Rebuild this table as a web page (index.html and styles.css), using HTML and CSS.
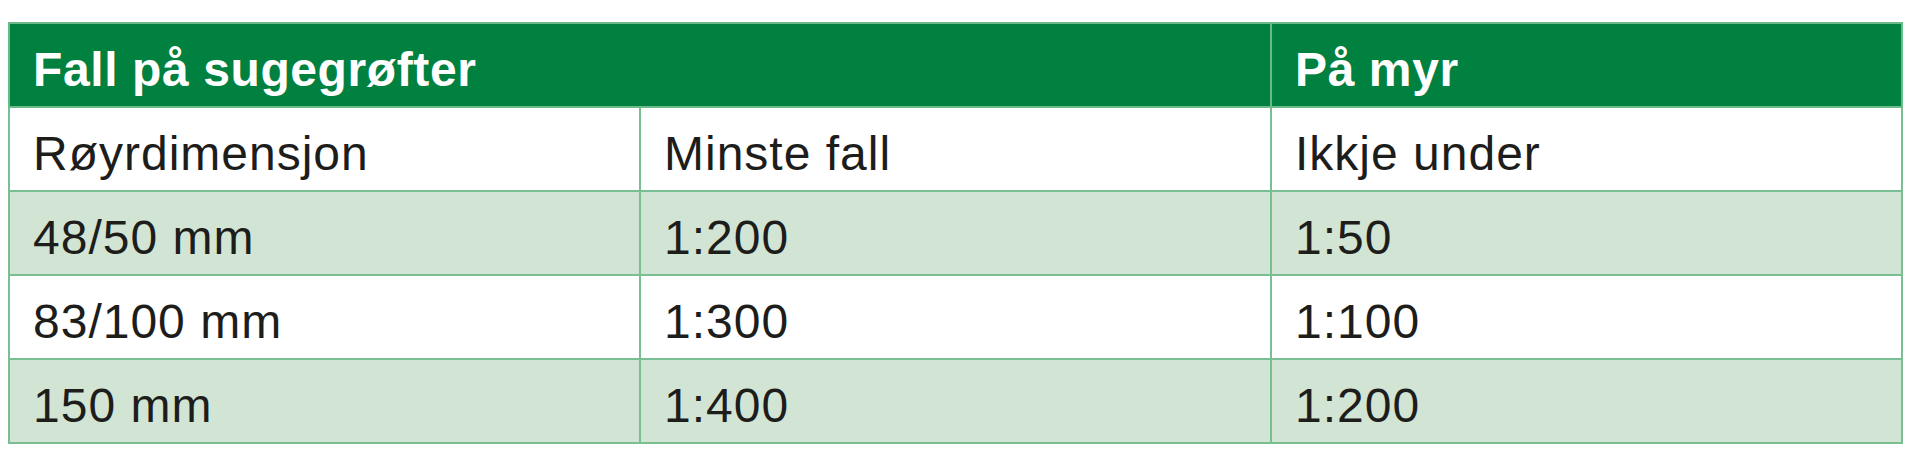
FILE: index.html
```html
<!DOCTYPE html>
<html lang="no">
<head>
<meta charset="utf-8">
<title>Fall på sugegrøfter</title>
<link rel="stylesheet" href="styles.css">
</head>
<body>
<table class="fall-table">
  <colgroup>
    <col class="col-third">
    <col class="col-third">
    <col class="col-third">
  </colgroup>
  <thead>
    <tr class="head-row">
      <th colspan="2">Fall på sugegrøfter</th>
      <th>På myr</th>
    </tr>
  </thead>
  <tbody>
    <tr class="row-white">
      <td>Røyrdimensjon</td>
      <td>Minste fall</td>
      <td>Ikkje under</td>
    </tr>
    <tr class="row-green">
      <td>48/50 mm</td>
      <td>1:200</td>
      <td>1:50</td>
    </tr>
    <tr class="row-white">
      <td>83/100 mm</td>
      <td>1:300</td>
      <td>1:100</td>
    </tr>
    <tr class="row-green">
      <td>150 mm</td>
      <td>1:400</td>
      <td>1:200</td>
    </tr>
  </tbody>
</table>
</body>
</html>
```

FILE: styles.css
```css
html, body {
  background: #ffffff;
}
body {
  margin: 8px;
  font-family: "Liberation Sans", Arial, sans-serif;
  color: #1d1d1b;
}
.fall-table {
  margin-top: 14px;
  width: 1894px;
  border-collapse: collapse;
  table-layout: fixed;
}
.col-third {
  width: 631px;
}
.fall-table th,
.fall-table td {
  border: 2px solid #78bf92;
  box-sizing: border-box;
  height: 84px;
  padding: 18px 0 9px 23px;
  line-height: 55px;
  text-align: left;
  vertical-align: top;
  font-size: 48px;
  letter-spacing: 1px;
  white-space: nowrap;
}
.head-row th {
  background: #008140;
  color: #ffffff;
  font-weight: 700;
  letter-spacing: 0.6px;
  border-color: #6cb98a;
}
.row-white td {
  background: #ffffff;
}
.row-green td {
  background: #d2e5d5;
}
```
